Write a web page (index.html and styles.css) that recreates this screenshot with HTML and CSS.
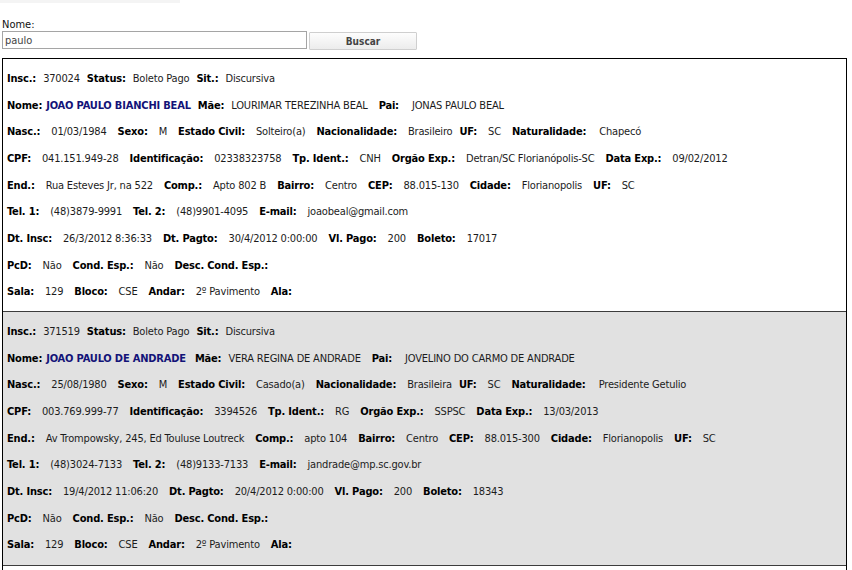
FILE: index.html
```html
<!DOCTYPE html>
<html lang="pt">
<head>
<meta charset="utf-8">
<title>Busca de inscritos</title>
<link rel="stylesheet" href="styles.css">
</head>
<body>
<div class="topstrip"></div>
<div class="page">
  <form class="search">
    <label class="search-label" for="nome">Nome:</label>
    <div class="search-row">
      <input id="nome" class="search-input" type="text" value="paulo">
      <button type="button" class="search-btn">Buscar</button>
    </div>
  </form>

  <div class="results">
    <div class="rec">
      <div class="row r1"><b>Insc.:</b><span>370024</span><b>Status:</b><span>Boleto Pago</span><b>Sit.:</b><span>Discursiva</span></div>
      <div class="row"><b>Nome:</b><b class="name n4">JOAO PAULO BIANCHI BEAL</b><b class="n7">Mãe:</b><span class="n7">LOURIMAR TEREZINHA BEAL</span><b>Pai:</b><span class="n13">JONAS PAULO BEAL</span></div>
      <div class="row"><b>Nasc.:</b><span>01/03/1984</span><b>Sexo:</b><span>M</span><b>Estado Civil:</b><span>Solteiro(a)</span><b>Nacionalidade:</b><span>Brasileiro</span><b class="n7">UF:</b><span>SC</span><b>Naturalidade:</b><span class="n13">Chapecó</span></div>
      <div class="row"><b>CPF:</b><span>041.151.949-28</span><b>Identificação:</b><span>02338323758</span><b>Tp. Ident.:</b><span>CNH</span><b>Orgão Exp.:</b><span>Detran/SC Florianópolis-SC</span><b>Data Exp.:</b><span>09/02/2012</span></div>
      <div class="row"><b>End.:</b><span>Rua Esteves Jr, na 522</span><b>Comp.:</b><span>Apto 802 B</span><b>Bairro:</b><span>Centro</span><b>CEP:</b><span>88.015-130</span><b>Cidade:</b><span>Florianopolis</span><b>UF:</b><span>SC</span></div>
      <div class="row"><b>Tel. 1:</b><span>(48)3879-9991</span><b>Tel. 2:</b><span>(48)9901-4095</span><b>E-mail:</b><span>joaobeal@gmail.com</span></div>
      <div class="row"><b>Dt. Insc:</b><span>26/3/2012 8:36:33</span><b>Dt. Pagto:</b><span>30/4/2012 0:00:00</span><b>Vl. Pago:</b><span>200</span><b>Boleto:</b><span>17017</span></div>
      <div class="row"><b>PcD:</b><span>Não</span><b>Cond. Esp.:</b><span>Não</span><b>Desc. Cond. Esp.:</b></div>
      <div class="row"><b>Sala:</b><span>129</span><b>Bloco:</b><span>CSE</span><b>Andar:</b><span>2º Pavimento</span><b>Ala:</b></div>
    </div>

    <div class="rec alt">
      <div class="row r1"><b>Insc.:</b><span>371519</span><b>Status:</b><span>Boleto Pago</span><b>Sit.:</b><span>Discursiva</span></div>
      <div class="row"><b>Nome:</b><b class="name n4">JOAO PAULO DE ANDRADE</b><b class="n9">Mãe:</b><span class="n7">VERA REGINA DE ANDRADE</span><b>Pai:</b><span class="n13">JOVELINO DO CARMO DE ANDRADE</span></div>
      <div class="row"><b>Nasc.:</b><span>25/08/1980</span><b>Sexo:</b><span>M</span><b>Estado Civil:</b><span>Casado(a)</span><b>Nacionalidade:</b><span>Brasileira</span><b class="n7">UF:</b><span>SC</span><b>Naturalidade:</b><span class="n13">Presidente Getulio</span></div>
      <div class="row"><b>CPF:</b><span>003.769.999-77</span><b>Identificação:</b><span>3394526</span><b>Tp. Ident.:</b><span>RG</span><b>Orgão Exp.:</b><span>SSPSC</span><b>Data Exp.:</b><span>13/03/2013</span></div>
      <div class="row"><b>End.:</b><span>Av Trompowsky, 245, Ed Touluse Loutreck</span><b>Comp.:</b><span>apto 104</span><b>Bairro:</b><span>Centro</span><b>CEP:</b><span>88.015-300</span><b>Cidade:</b><span>Florianopolis</span><b>UF:</b><span>SC</span></div>
      <div class="row"><b>Tel. 1:</b><span>(48)3024-7133</span><b>Tel. 2:</b><span>(48)9133-7133</span><b>E-mail:</b><span>jandrade@mp.sc.gov.br</span></div>
      <div class="row"><b>Dt. Insc:</b><span>19/4/2012 11:06:20</span><b>Dt. Pagto:</b><span>20/4/2012 0:00:00</span><b>Vl. Pago:</b><span>200</span><b>Boleto:</b><span>18343</span></div>
      <div class="row"><b>PcD:</b><span>Não</span><b>Cond. Esp.:</b><span>Não</span><b>Desc. Cond. Esp.:</b></div>
      <div class="row"><b>Sala:</b><span>129</span><b>Bloco:</b><span>CSE</span><b>Andar:</b><span>2º Pavimento</span><b>Ala:</b></div>
    </div>

    <div class="rec rest"></div>
  </div>
</div>
</body>
</html>
```

FILE: styles.css
```css
html, body {
  margin: 0;
  padding: 0;
  overflow: hidden;
  background: #fff;
}
body {
  font-family: "DejaVu Sans Condensed", "DejaVu Sans", sans-serif;
  font-size: 11px;
  color: #1c1c1c;
}
.topstrip {
  width: 180px;
  height: 3px;
  background: #f4f4f4;
}
.page {
  padding: 0 5px 0 2px;
}
.search {
  margin: 0;
  padding-top: 15px;
}
.search-label {
  display: block;
  height: 13px;
  line-height: 13px;
  color: #111;
}
.search-row {
  display: flex;
  align-items: flex-start;
  gap: 2px;
}
.search-input {
  box-sizing: border-box;
  width: 305px;
  height: 18px;
  margin: 0;
  padding: 0 2px;
  border: 1px solid #a5a5a5;
  font-family: inherit;
  font-size: 11px;
  color: #444;
  background: #fff;
  outline: none;
}
.search-btn {
  box-sizing: border-box;
  width: 108px;
  height: 18px;
  margin: 1px 0 0 0;
  padding: 0;
  border: 1px solid #cfcfcf;
  border-radius: 1px;
  background: linear-gradient(#fdfdfd, #ececec);
  font-family: inherit;
  font-size: 10px;
  font-weight: bold;
  color: #444;
}
.results {
  margin-top: 8px;
  border: 1px solid #000;
  border-bottom: 0;
}
.rec {
  padding: 7px 4px 5px 4px;
  background: #fff;
}
.rec + .rec {
  border-top: 1px solid #3c3c3c;
}
.rec.alt {
  background: #e1e1e1;
  padding-bottom: 6px;
}
.rec.rest {
  height: 40px;
  padding: 0;
}
.row {
  display: flex;
  align-items: baseline;
  height: 26.667px;
  line-height: 26.667px;
  white-space: nowrap;
  letter-spacing: -0.18px;
}
.row > * + * {
  margin-left: 11px;
}
.row.r1 > * + * {
  margin-left: 7px;
}
.row b {
  font-weight: bold;
  color: #000;
}
.row b.name {
  color: #131378;
}
.row > .n4 { margin-left: 4px; }
.row > .n7 { margin-left: 7px; }
.row > .n9 { margin-left: 9px; }
.row > .n13 { margin-left: 13px; }
```
